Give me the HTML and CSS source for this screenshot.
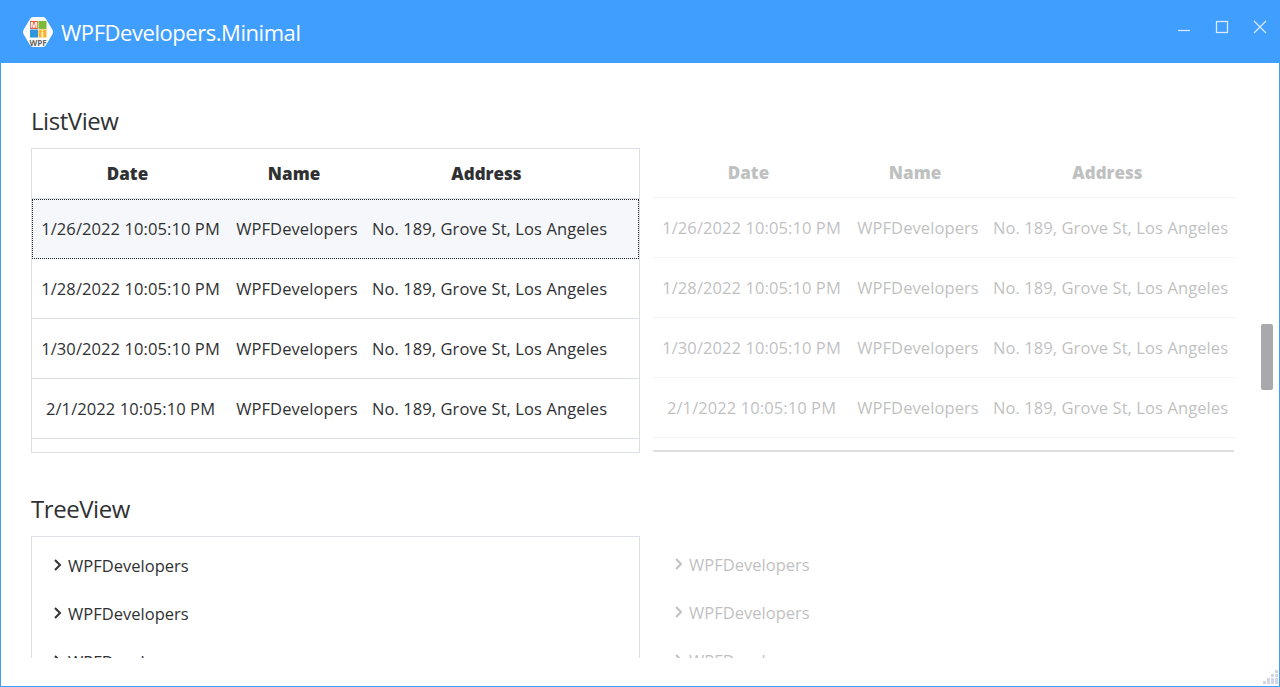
FILE: index.html
```html
<!DOCTYPE html>
<html lang="en">
<head>
<meta charset="utf-8">
<title>WPFDevelopers.Minimal</title>
<link rel="stylesheet" href="styles.css">
</head>
<body>
<div class="window">
  <header class="titlebar">
    <div class="logo">
      <svg class="logo-hex" width="32" height="32" viewBox="0 0 32 32"><path d="M11 1h10q2 0 3 2l6 10q2 3 0 6l-6 10q-1 2-3 2H11q-2 0-3-2L2 19q-2-3 0-6L8 3q1-2 3-2z" fill="#fff"/><rect x="8" y="5" width="8" height="8" fill="#e8633a"/><rect x="16.500" y="5" width="8" height="8" fill="#7cb83a"/><rect x="8" y="13.500" width="8" height="8" fill="#2f96dc"/><rect x="16.500" y="13.500" width="8" height="8" fill="#f5b52e"/></svg>
      <span class="logo-m">M</span><span class="logo-i">i</span><span class="logo-wpf">WPF</span>
    </div>
    <div class="app-title">WPFDevelopers.Minimal</div>
    <div class="controls">
      <svg width="14" height="14" viewBox="0 0 14 14"><path d="M1 10.500h12" stroke="#d9ebff" stroke-width="1.200" fill="none"/></svg>
      <svg width="14" height="14" viewBox="0 0 14 14"><rect x="1.500" y="1.500" width="11" height="11" stroke="#d9ebff" stroke-width="1.300" fill="none"/></svg>
      <svg width="14" height="14" viewBox="0 0 14 14"><path d="M1 1l12 12M13 1L1 13" stroke="#d9ebff" stroke-width="1.200" fill="none"/></svg>
    </div>
  </header>
  <main class="content">
    <h2 class="section-title">ListView</h2>
    <div class="pair">
      <div class="list bordered">
        <div class="row head"><span>Date</span><span>Name</span><span>Address</span></div>
        <div class="row selected"><span>1/26/2022 10:05:10 PM</span><span>WPFDevelopers</span><span>No. 189, Grove St, Los Angeles</span></div>
        <div class="row"><span>1/28/2022 10:05:10 PM</span><span>WPFDevelopers</span><span>No. 189, Grove St, Los Angeles</span></div>
        <div class="row"><span>1/30/2022 10:05:10 PM</span><span>WPFDevelopers</span><span>No. 189, Grove St, Los Angeles</span></div>
        <div class="row"><span>2/1/2022 10:05:10 PM</span><span>WPFDevelopers</span><span>No. 189, Grove St, Los Angeles</span></div>
      </div>
      <div class="list disabled">
        <div class="row head"><span>Date</span><span>Name</span><span>Address</span></div>
        <div class="row"><span>1/26/2022 10:05:10 PM</span><span>WPFDevelopers</span><span>No. 189, Grove St, Los Angeles</span></div>
        <div class="row"><span>1/28/2022 10:05:10 PM</span><span>WPFDevelopers</span><span>No. 189, Grove St, Los Angeles</span></div>
        <div class="row"><span>1/30/2022 10:05:10 PM</span><span>WPFDevelopers</span><span>No. 189, Grove St, Los Angeles</span></div>
        <div class="row"><span>2/1/2022 10:05:10 PM</span><span>WPFDevelopers</span><span>No. 189, Grove St, Los Angeles</span></div>
        <div class="hscroll"></div>
      </div>
    </div>
    <h2 class="section-title tree-title">TreeView</h2>
    <div class="pair">
      <div class="tree bordered">
        <div class="node"><svg class="chev" width="10" height="12" viewBox="0 0 10 12"><path d="M2 1l5 5-5 5" stroke="#333" stroke-width="2" fill="none"/></svg><span>WPFDevelopers</span></div>
        <div class="node"><svg class="chev" width="10" height="12" viewBox="0 0 10 12"><path d="M2 1l5 5-5 5" stroke="#333" stroke-width="2" fill="none"/></svg><span>WPFDevelopers</span></div>
        <div class="node"><svg class="chev" width="10" height="12" viewBox="0 0 10 12"><path d="M2 1l5 5-5 5" stroke="#333" stroke-width="2" fill="none"/></svg><span>WPFDevelopers</span></div>
      </div>
      <div class="tree disabled">
        <div class="node"><svg class="chev" width="10" height="12" viewBox="0 0 10 12"><path d="M2 1l5 5-5 5" stroke="#333" stroke-width="2" fill="none"/></svg><span>WPFDevelopers</span></div>
        <div class="node"><svg class="chev" width="10" height="12" viewBox="0 0 10 12"><path d="M2 1l5 5-5 5" stroke="#333" stroke-width="2" fill="none"/></svg><span>WPFDevelopers</span></div>
        <div class="node"><svg class="chev" width="10" height="12" viewBox="0 0 10 12"><path d="M2 1l5 5-5 5" stroke="#333" stroke-width="2" fill="none"/></svg><span>WPFDevelopers</span></div>
      </div>
    </div>
  </main>
  <footer class="statusbar"></footer>
  <div class="vscroll"></div>
  <svg class="grip" width="16" height="16" viewBox="0 0 16 16" fill="#d3d6e4"><rect x="12" y="1" width="3" height="3"/><rect x="8" y="5" width="3" height="3"/><rect x="12" y="5" width="3" height="3"/><rect x="4" y="9" width="3" height="3"/><rect x="8" y="9" width="3" height="3"/><rect x="12" y="9" width="3" height="3"/><rect x="0" y="12" width="3" height="3"/><rect x="4" y="12" width="3" height="3"/><rect x="8" y="12" width="3" height="3"/><rect x="12" y="12" width="3" height="3"/></svg>
</div>
</body>
</html>
```
FILE: styles.css
```css
* { box-sizing: border-box; }
html, body { margin: 0; height: 100%; }
body { font-family: "Open Sans", "Noto Sans", sans-serif; color: #303133; background: #fff; overflow: hidden; }
.window { position: relative; width: 1280px; height: 687px; display: flex; flex-direction: column; border: 1px solid #409eff; border-top: 0; background: #fff; }
.titlebar { height: 63px; margin: 0 -1px; background: #409eff; display: flex; align-items: center; padding-left: 22px; flex: none; }
.logo { position: relative; width: 32px; height: 32px; margin-right: 7px; }
.logo-hex { display: block; }
.logo-m, .logo-i, .logo-wpf { position: absolute; font-weight: 700; line-height: 1; }
.logo-m { left: 8px; top: 5px; width: 8px; text-align: center; color: #fff; font-size: 8px; }
.logo-i { left: 16.500px; top: 14px; width: 8px; text-align: center; color: #fff; font-size: 8px; }
.logo-wpf { left: 0; right: 0; top: 23px; text-align: center; color: #666; font-size: 8px; }
.app-title { color: #fff; font-size: 22px; letter-spacing: -0.45px; }
.controls { margin-left: auto; display: flex; gap: 24px; padding: 0 13px 9px 0; }
.controls svg { display: block; }
.content { height: 595px; overflow: hidden; padding: 0 30px; flex: none; }
.section-title { margin: 40px 0 9px; font-weight: 400; font-size: 24px; line-height: 36px; letter-spacing: -0.45px; height: 36px; }
.tree-title { margin-top: 38px; margin-bottom: 9px; }
.pair { display: grid; grid-template-columns: 609px 583px; column-gap: 13px; align-items: start; }
.bordered { border: 1px solid #dcdfe6; }
.list { height: 305px; display: flex; flex-direction: column; position: relative; }
.row { display: grid; grid-template-columns: 197px 136px 249px; height: 60px; align-items: center; text-align: center; border-bottom: 1px solid #dcdfe6; font-size: 16.500px; letter-spacing: 0.09px; flex: none; white-space: nowrap; }
.row.head { height: 50px; font-weight: 800; letter-spacing: 0; font-size: 17px; }
.row.head span { padding-right: 6px; }
.row.selected { background: #f5f7fa; outline: 1px dotted #222; outline-offset: -1px; border-bottom-color: transparent; }
.disabled { opacity: 0.3; }
.hscroll { position: absolute; left: 0; right: 2px; top: 302px; height: 2px; background: #909399; }
.tree { height: 140px; padding-top: 4px; }
.bordered.tree { border-bottom: 0; }
.node { display: flex; align-items: center; height: 48px; padding-left: 21px; font-size: 16.500px; letter-spacing: 0.02px; gap: 5px; white-space: nowrap; }
.chev { flex: none; margin-top: -1px; }
.statusbar { flex: 1; }
.vscroll { position: absolute; left: 1260px; top: 324px; width: 12px; height: 66px; background: #a8a9ad; border-radius: 2px; }
.grip { position: absolute; right: 0; bottom: 1px; }
```
